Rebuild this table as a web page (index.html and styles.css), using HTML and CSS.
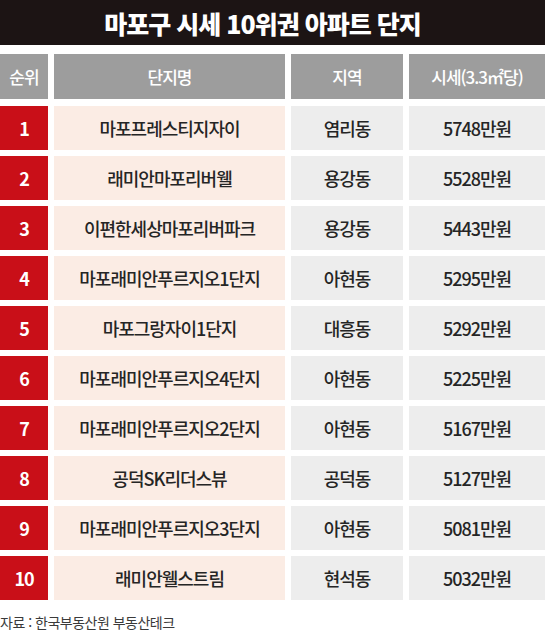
FILE: index.html
```html
<!DOCTYPE html>
<html lang="ko">
<head>
<meta charset="utf-8">
<title>마포구 시세 10위권 아파트 단지</title>
<link rel="stylesheet" href="styles.css">
</head>
<body>
<div class="page">
  <h1 class="title">마포구 시세 10위권 아파트 단지</h1>
  <div class="table">
    <div class="cell head">순위</div>
    <div class="cell head">단지명</div>
    <div class="cell head">지역</div>
    <div class="cell head">시세(3.3㎡당)</div>

    <div class="cell rank">1</div><div class="cell name">마포프레스티지자이</div><div class="cell gray">염리동</div><div class="cell gray">5748만원</div>
    <div class="cell rank">2</div><div class="cell name">래미안마포리버웰</div><div class="cell gray">용강동</div><div class="cell gray">5528만원</div>
    <div class="cell rank">3</div><div class="cell name">이편한세상마포리버파크</div><div class="cell gray">용강동</div><div class="cell gray">5443만원</div>
    <div class="cell rank">4</div><div class="cell name">마포래미안푸르지오1단지</div><div class="cell gray">아현동</div><div class="cell gray">5295만원</div>
    <div class="cell rank">5</div><div class="cell name">마포그랑자이1단지</div><div class="cell gray">대흥동</div><div class="cell gray">5292만원</div>
    <div class="cell rank">6</div><div class="cell name">마포래미안푸르지오4단지</div><div class="cell gray">아현동</div><div class="cell gray">5225만원</div>
    <div class="cell rank">7</div><div class="cell name">마포래미안푸르지오2단지</div><div class="cell gray">아현동</div><div class="cell gray">5167만원</div>
    <div class="cell rank">8</div><div class="cell name">공덕SK리더스뷰</div><div class="cell gray">공덕동</div><div class="cell gray">5127만원</div>
    <div class="cell rank">9</div><div class="cell name">마포래미안푸르지오3단지</div><div class="cell gray">아현동</div><div class="cell gray">5081만원</div>
    <div class="cell rank">10</div><div class="cell name">래미안웰스트림</div><div class="cell gray">현석동</div><div class="cell gray">5032만원</div>
  </div>
  <p class="source">자료 : 한국부동산원 부동산테크</p>
</div>
</body>
</html>
```
FILE: styles.css
```css
html, body {
  margin: 0;
  padding: 0;
  background: #ffffff;
}
.page {
  width: 545px;
  font-family: "Noto Sans CJK KR", "Noto Sans", sans-serif;
  color: #252525;
}
.title {
  margin: 0;
  height: 45px;
  padding-right: 20px;
  background: #1c1414;
  color: #ffffff;
  font-size: 25px;
  font-weight: 900;
  letter-spacing: -1px;
  display: flex;
  align-items: center;
  justify-content: center;
}
.table {
  margin-top: 9px;
  display: grid;
  grid-template-columns: 48px 231px 112px 136px;
  grid-template-rows: 46px repeat(10, 44px);
  column-gap: 6px;
  row-gap: 6px;
}
.table .cell:nth-child(-n+4) {
  margin-bottom: 1px;
}
.cell {
  display: flex;
  align-items: center;
  justify-content: center;
  font-size: 18px;
  font-weight: 500;
  letter-spacing: -1px;
  white-space: nowrap;
}
.head {
  background: #9d9d9d;
  color: #ffffff;
  font-size: 17px;
  font-weight: 500;
}
.rank {
  background: #c90f18;
  color: #ffffff;
  font-weight: 700;
}
.name {
  background: #fbece4;
}
.gray {
  background: #ededed;
}
.source {
  margin: 12px 0 0 0;
  font-size: 14px;
  letter-spacing: -0.5px;
  color: #3a3a3a;
}
```
